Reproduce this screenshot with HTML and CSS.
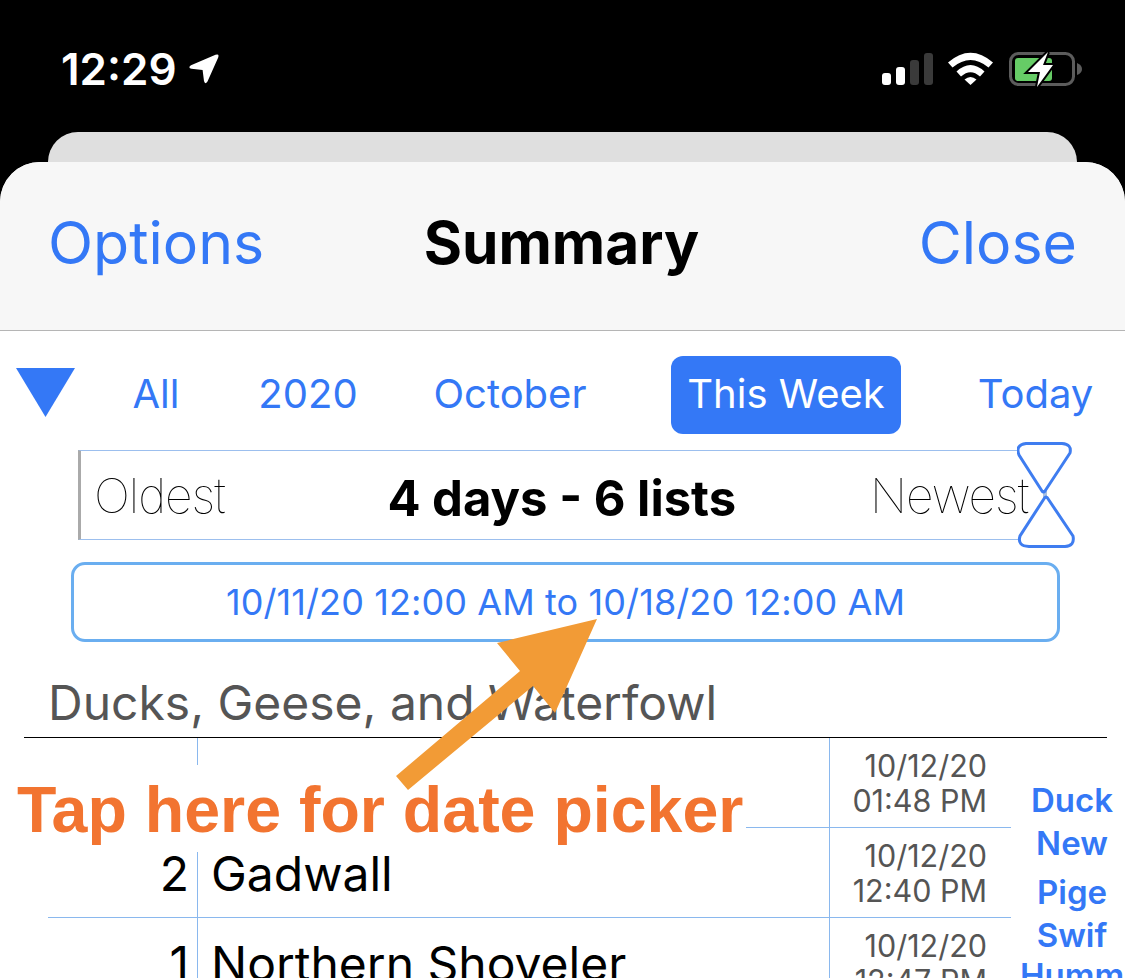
FILE: index.html
```html
<!DOCTYPE html>
<html lang="en">
<head>
  <meta charset="UTF-8" />
  <meta name="viewport" content="width=device-width, initial-scale=1.0"/>
  <title>Summary</title>
  <link rel="stylesheet" href="styles.css">
</head>
<body>
  <div class="status-bar">
    <div class="status-left">
      <span class="clock">12:29</span>
      <svg class="loc-icon" viewBox="0 0 30 30"><path d="M26.5 .8 Q30.5 -.5 29.2 3.5 L18.5 27.5 Q16 31 15 27 L13.6 16 L2.5 14.8 Q-1.5 13.5 2 11.2 Z" fill="#fff"/></svg>
    </div>
    <div class="status-right">
      <svg class="signal-icon" viewBox="0 0 51 32">
        <rect x="0" y="20" width="9" height="12" rx="3" fill="#fff"/>
        <rect x="14" y="14" width="9" height="18" rx="3" fill="#fff"/>
        <rect x="28" y="7" width="9" height="25" rx="3" fill="#3a3a3a"/>
        <rect x="42" y="0" width="9" height="32" rx="3" fill="#3a3a3a"/>
      </svg>
      <svg class="wifi-icon" viewBox="0 0 45 33">
        <path d="M0 10.5 Q22.5 -9 45 10.5 L40.5 15.5 Q22.5 .5 4.5 15.5 Z" fill="#fff"/>
        <path d="M8.5 19.5 Q22.5 6.5 36.5 19.5 L32 24.5 Q22.5 16 13 24.5 Z" fill="#fff"/>
        <path d="M16.5 27.5 Q22.5 22.5 28.5 27.5 L22.5 33 Z" fill="#fff"/>
      </svg>
      <svg class="battery-icon" viewBox="0 0 74 37">
        <rect x="1.5" y="2.5" width="63" height="31" rx="8" fill="none" stroke="#5c5c5c" stroke-width="3"/>
        <path d="M68 12 Q73 14 73 18 Q73 22 68 24 Z" fill="#5c5c5c"/>
        <rect x="6" y="7" width="37" height="23" rx="3" fill="#66cc66"/>
        <path d="M39 1 L19 21 L31 21 L28 36 L44 14 L34 14 Z" fill="#fff" stroke="#000" stroke-width="4" paint-order="stroke"/>
      </svg>
    </div>
  </div>

  <div class="ghost-card"></div>

  <div class="sheet">
    <div class="nav-bar">
      <span class="nav-link">Options</span>
      <span class="nav-title">Summary</span>
      <span class="nav-link">Close</span>
    </div>

    <div class="period-row">
      <svg class="period-toggle" viewBox="0 0 59 49"><path d="M0 0 H59 L29.5 49 Z" fill="#3478f6"/></svg>
      <span class="period">All</span>
      <span class="period">2020</span>
      <span class="period">October</span>
      <span class="period active">This Week</span>
      <span class="period">Today</span>
    </div>

    <div class="slider-row">
      <div class="slider">
        <span class="slider-end">Oldest</span>
        <span class="slider-count">4 days - 6 lists</span>
        <span class="slider-end">Newest</span>
      </div>
      <svg class="slider-thumb" viewBox="0 0 58 106">
        <rect x="26" y="48" width="4" height="12" fill="#a9c0e0"/>
        <path d="M9 1.5 H45 Q55 2 53 11 L28 49 Q26.5 51 25 49 L2 13 Q-2 3 9 1.5 Z M12 104.5 H48 Q58 104 56 94 L30.5 56 Q29 54 27.5 56 L3 94 Q0 104 12 104.5 Z" fill="#fff" stroke="#3f7df0" stroke-width="3"/>
      </svg>
    </div>

    <div class="date-range">10/11/20 12:00 AM to 10/18/20 12:00 AM</div>

    <h2 class="section-title">Ducks, Geese, and Waterfowl</h2>

    <div class="table-wrap">
      <div class="sighting">
        <span class="count">20</span>
        <span class="name">Canada Goose</span>
        <span class="when">10/12/20<br>01:48 PM</span>
      </div>
      <div class="sighting">
        <span class="count">2</span>
        <span class="name">Gadwall</span>
        <span class="when">10/12/20<br>12:40 PM</span>
      </div>
      <div class="sighting">
        <span class="count">1</span>
        <span class="name">Northern Shoveler</span>
        <span class="when">10/12/20<br>12:47 PM</span>
      </div>
      <div class="index-list">
        <span>Duck</span>
        <span>New</span>
        <span>Pige</span>
        <span>Swif</span>
        <span>Humm</span>
      </div>
    </div>
  </div>

  <!-- annotation on top of the screenshot -->
  <div class="callout">Tap here for date picker</div>
  <svg class="callout-arrow" viewBox="0 0 1125 978"><path d="M597 619 L497 643 L520 671 L396 776 L408 790 L533 686 L555 713 Z" fill="#f29b36"/></svg>
</body>
</html>
```

FILE: styles.css
```css
* { box-sizing: border-box; }
html, body {
  margin: 0;
  height: 978px;
  overflow: hidden;
}
body {
  background-color: #000;
  font-family: 'Inter', sans-serif;
  position: relative;
}
.status-bar {
  height: 132px;
  padding: 50px 42px 0 61px;
  display: flex;
  justify-content: space-between;
  align-items: flex-start;
}
.status-left {
  display: flex;
  align-items: center;
  gap: 12px;
}
.clock {
  color: #fff;
  font-size: 44px;
  font-weight: 600;
  line-height: 38px;
}
.loc-icon { width: 30px; height: 30px; }
.status-right {
  display: flex;
  align-items: flex-start;
  gap: 15px;
  padding-top: 3px;
}
.signal-icon { width: 51px; height: 32px; }
.wifi-icon { width: 45px; height: 33px; margin-top: -1px; }
.battery-icon { width: 74px; height: 37px; margin: -2px 0 0 1px; }
.ghost-card {
  height: 30px;
  margin: 0 48px;
  background-color: #dfdfdf;
  border-radius: 30px 30px 0 0;
}
.sheet {
  height: 816px;
  background-color: #fff;
  border-radius: 40px 40px 0 0;
  overflow: hidden;
}
.nav-bar {
  height: 169px;
  padding: 0 48px 8px 48px;
  background-color: #f7f7f7;
  border-bottom: 1px solid #b5b5b5;
  display: flex;
  justify-content: space-between;
  align-items: center;
  font-size: 59px;
}
.nav-link { color: #3478f6; }
.nav-title {
  margin-right: 60px;
  color: #000;
  font-weight: 700;
  font-size: 58.5px;
}
.period-row {
  margin-top: 24px;
  height: 80px;
  padding-left: 16px;
  display: grid;
  grid-template-columns: 74px 132px 172px 232px 320px 179px;
  align-items: center;
  justify-items: center;
  color: #3478f6;
  font-size: 40px;
}
.period-toggle {
  justify-self: start;
  width: 59px;
  height: 49px;
  margin-top: -5px;
}
.period {
  height: 78px;
  line-height: 75px;
}
.period.active {
  background-color: #3478f6;
  color: #fff;
  padding: 0 16px;
  border-radius: 12px;
}
.slider-row {
  position: relative;
  margin: 15px 0 0 78px;
  height: 92px;
}
.slider {
  width: 964px;
  height: 90px;
  border: 1px solid #9cbfee;
  border-right: none;
  border-left: 3px solid #aaa;
  padding: 6px 14px 0 13px;
  display: flex;
  justify-content: space-between;
  align-items: center;
}
.slider-end {
  margin-top: -6px;
  color: #000;
  font-size: 48px;
  font-weight: 100;
  letter-spacing: -1px;
  will-change: transform;
}
.slider-count {
  margin-left: 29px;
  color: #000;
  font-size: 49px;
  font-weight: 700;
}
.slider-thumb {
  position: absolute;
  left: 939px;
  top: -8px;
  width: 58px;
  height: 106px;
}
.date-range {
  margin: 20px 0 0 71px;
  width: 989px;
  height: 80px;
  border: 3px solid #6aaef0;
  border-radius: 14px;
  display: flex;
  justify-content: center;
  align-items: center;
  color: #3478f6;
  font-size: 36px;
  letter-spacing: .1px;
}
.section-title {
  margin: 27px 0 0 48px;
  height: 68px;
  line-height: 68px;
  color: #555;
  font-size: 48px;
  font-weight: 400;
}
.table-wrap {
  position: relative;
  border-top: 1px solid #000;
  margin-left: 24px;
  width: 1083px;
  height: 300px;
}
.sighting {
  margin-left: 24px;
  width: 963px;
  height: 90px;
  border-bottom: 1px solid #8ab8ee;
  display: grid;
  grid-template-columns: 150px 631px 158px;
  align-items: center;
}
.count {
  height: 100%;
  padding: 2px 8px 0 0;
  border-right: 1px solid #8ab8ee;
  display: flex;
  justify-content: flex-end;
  align-items: center;
  color: #000;
  font-size: 48px;
}
.name {
  padding: 2px 0 0 13px;
  color: #000;
  font-size: 48px;
  white-space: nowrap;
}
.when {
  height: 100%;
  border-left: 1px solid #8ab8ee;
  display: flex;
  align-items: center;
  justify-content: flex-end;
  text-align: right;
  color: #555;
  font-size: 30.5px;
  line-height: 35px;
}
.index-list {
  position: absolute;
  left: 1000px;
  top: 41px;
  width: 96px;
  display: flex;
  flex-direction: column;
  align-items: center;
  color: #3478f6;
  font-size: 33px;
  font-weight: 600;
  line-height: 43px;
}
.index-list span:nth-child(3) { margin-top: 6px; }
.index-list span:nth-child(5) { margin-top: -3px; }
.callout {
  position: absolute;
  left: 0;
  top: 765px;
  width: 746px;
  height: 87px;
  padding: 8px 0 0 17px;
  background-color: #fff;
  color: #f27430;
  font-family: 'Liberation Sans', sans-serif;
  font-size: 64.5px;
  font-weight: 700;
  white-space: nowrap;
}
.callout-arrow {
  position: absolute;
  left: 0;
  top: 0;
  width: 1125px;
  height: 978px;
}
```
